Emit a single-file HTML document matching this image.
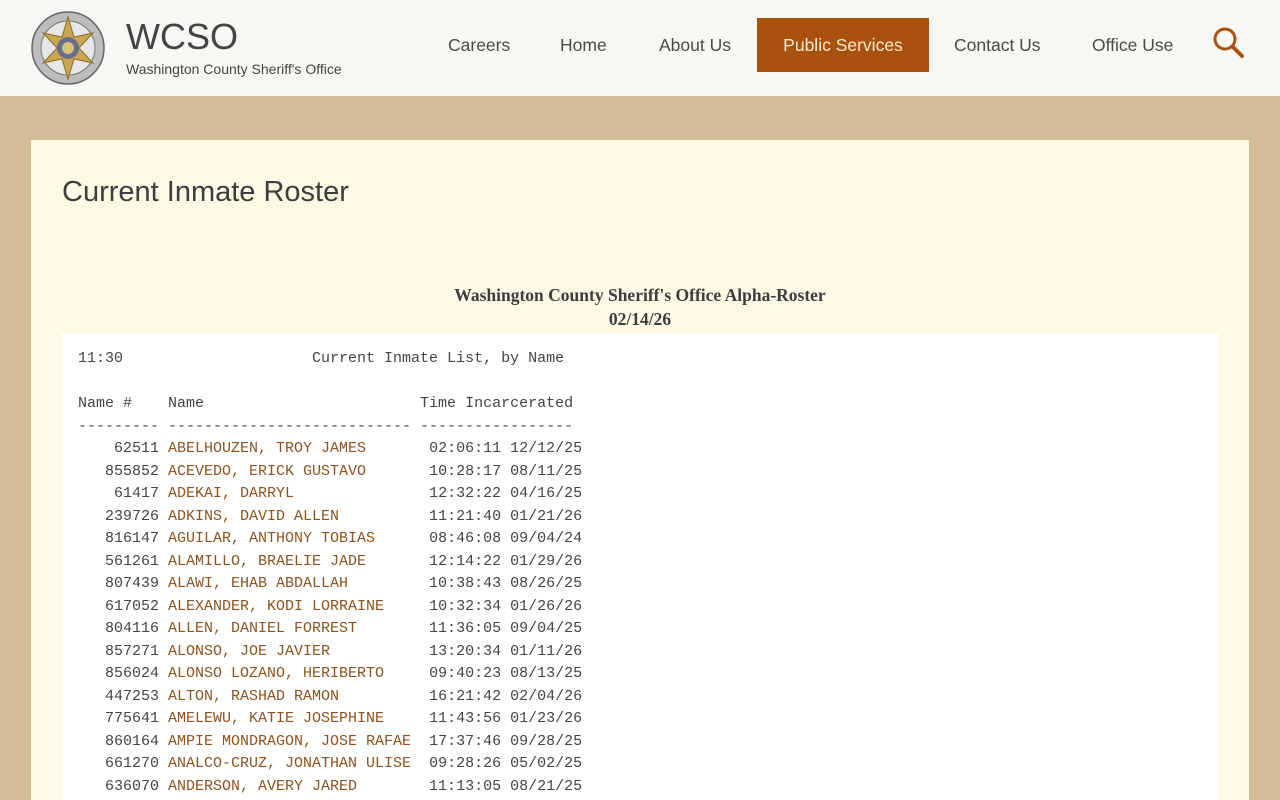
<!DOCTYPE html>
<html style="overflow:hidden"><head><meta charset="utf-8"><style>
*{margin:0;padding:0;box-sizing:border-box}
html,body{width:1280px;height:800px;overflow:hidden}
body{background:#d3bd97;font-family:"Liberation Sans",sans-serif;position:relative}
.hdr{position:absolute;left:0;top:0;width:1280px;height:96px;background:#f9f7f3}
.logo{position:absolute;left:31px;top:11px;width:74px;height:74px}
.t1{position:absolute;left:126px;top:16px;font-size:36px;color:#444}
.t2{position:absolute;left:126px;top:61px;font-size:14px;color:#444}
.nav a{position:absolute;top:18px;height:54px;line-height:54px;font-size:17.5px;color:#4a4a4a;text-decoration:none;white-space:nowrap}
.nav a.act{background:#a9520f;color:#fdebc8;left:757px;width:172px;text-align:center}
.panel{position:absolute;left:31px;top:140px;width:1218px;height:660px;background:#fef9e4;overflow:hidden}
h1{position:absolute;left:31px;top:36px;font-weight:normal;font-size:29px;color:#3d3d3d}
.rt{position:absolute;left:0;width:1218px;text-align:center;font-family:"Liberation Serif",serif;font-weight:bold;font-size:17.5px;color:#3d3d3d}
pre{position:absolute;left:31px;top:193px;width:1156px;height:500px;background:#fff;padding:15px 16px;font-family:"Liberation Mono",monospace;font-size:15px;line-height:22.5px;color:#444}
pre span{color:#8c531f}
</style></head><body>
<div class="hdr">
<svg class="logo" viewBox="0 0 74 74"><circle cx="37" cy="37" r="36" fill="#bdbdbd" stroke="#666" stroke-width="1.5"/><circle cx="37" cy="37" r="27" fill="#e6e6e6" stroke="#777"/><polygon points="37,6 43,26 62,22 48,37 62,52 43,48 37,68 31,48 12,52 26,37 12,22 31,26" fill="#c9a64e" stroke="#8a6d2a"/><circle cx="37" cy="37" r="11" fill="#6a6f8a"/><circle cx="37" cy="37" r="6" fill="#d8c27a"/></svg>
<div class="t1">WCSO</div>
<div class="t2">Washington County Sheriff's Office</div>
<div class="nav">
<a style="left:448px">Careers</a><a style="left:560px">Home</a><a style="left:659px">About Us</a><a class="act">Public Services</a><a style="left:954px">Contact Us</a><a style="left:1092px">Office Use</a>
</div>
<svg style="position:absolute;left:1212px;top:26px" width="34" height="34" viewBox="0 0 34 34"><circle cx="13" cy="13" r="10" fill="none" stroke="#a9520f" stroke-width="3"/><line x1="20.5" y1="20.5" x2="30" y2="30" stroke="#a9520f" stroke-width="4" stroke-linecap="round"/></svg>
</div>
<div class="panel">
<h1>Current Inmate Roster</h1>
<div class="rt" style="top:145px">Washington County Sheriff's Office Alpha-Roster</div>
<div class="rt" style="top:169px">02/14/26</div>
<pre>11:30                     Current Inmate List, by Name

Name #    Name                        Time Incarcerated
--------- --------------------------- -----------------
    62511 <span>ABELHOUZEN, TROY JAMES</span>       02:06:11 12/12/25
   855852 <span>ACEVEDO, ERICK GUSTAVO</span>       10:28:17 08/11/25
    61417 <span>ADEKAI, DARRYL</span>               12:32:22 04/16/25
   239726 <span>ADKINS, DAVID ALLEN</span>          11:21:40 01/21/26
   816147 <span>AGUILAR, ANTHONY TOBIAS</span>      08:46:08 09/04/24
   561261 <span>ALAMILLO, BRAELIE JADE</span>       12:14:22 01/29/26
   807439 <span>ALAWI, EHAB ABDALLAH</span>         10:38:43 08/26/25
   617052 <span>ALEXANDER, KODI LORRAINE</span>     10:32:34 01/26/26
   804116 <span>ALLEN, DANIEL FORREST</span>        11:36:05 09/04/25
   857271 <span>ALONSO, JOE JAVIER</span>           13:20:34 01/11/26
   856024 <span>ALONSO LOZANO, HERIBERTO</span>     09:40:23 08/13/25
   447253 <span>ALTON, RASHAD RAMON</span>          16:21:42 02/04/26
   775641 <span>AMELEWU, KATIE JOSEPHINE</span>     11:43:56 01/23/26
   860164 <span>AMPIE MONDRAGON, JOSE RAFAE</span>  17:37:46 09/28/25
   661270 <span>ANALCO-CRUZ, JONATHAN ULISE</span>  09:28:26 05/02/25
   636070 <span>ANDERSON, AVERY JARED</span>        11:13:05 08/21/25
</pre>
</div>
</body></html>
